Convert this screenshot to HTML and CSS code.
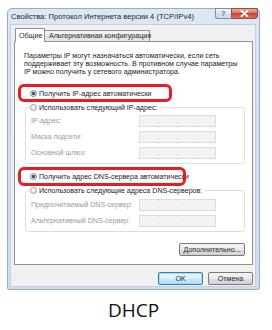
FILE: index.html
```html
<!DOCTYPE html>
<html>
<head>
<meta charset="utf-8">
<link rel="stylesheet" href="styles.css">
</head>
<body>
<div class="window">
  <div class="titlebar">
    <span class="title">Свойства: Протокол Интернета версии 4 (TCP/IPv4)</span>
    <div class="caption-btns">
      <span class="cbtn help">?</span>
      <span class="cbtn close"><svg width="9" height="7" viewBox="0 0 9 7"><path d="M1.5 0.8 L7.5 6.2 M7.5 0.8 L1.5 6.2" stroke="#fff" stroke-width="1.8" stroke-linecap="round"/></svg></span>
    </div>
  </div>
  <div class="client">
    <div class="tabs">
      <span class="tab active">Общие</span>
      <span class="tab">Альтернативная конфигурация</span>
    </div>
    <div class="panel">
      <p class="intro">Параметры IP могут назначаться автоматически, если сеть<br>поддерживает эту возможность. В противном случае параметры<br>IP можно получить у сетевого администратора.</p>
      <div class="radio-row mark mark-ip"><span class="radio on"></span>Получить IP-адрес автоматически</div>
      <div class="group">
        <div class="radio-row legend"><span class="radio"></span>Использовать следующий IP-адрес:</div>
        <div class="field"><span class="label">IP-адрес:</span><span class="ip"><i>.</i><i>.</i><i>.</i></span></div>
        <div class="field"><span class="label">Маска подсети:</span><span class="ip"><i>.</i><i>.</i><i>.</i></span></div>
        <div class="field"><span class="label">Основной шлюз:</span><span class="ip"><i>.</i><i>.</i><i>.</i></span></div>
      </div>
      <div class="radio-row mark mark-dns"><span class="radio on"></span>Получить адрес DNS-сервера автоматически</div>
      <div class="group group-dns">
        <div class="radio-row legend"><span class="radio"></span>Использовать следующие адреса DNS-серверов:</div>
        <div class="field"><span class="label">Предпочитаемый DNS-сервер:</span><span class="ip"><i>.</i><i>.</i><i>.</i></span></div>
        <div class="field"><span class="label">Альтернативный DNS-сервер:</span><span class="ip"><i>.</i><i>.</i><i>.</i></span></div>
      </div>
      <div class="adv-row"><span class="btn adv">Дополнительно...</span></div>
    </div>
    <div class="footer">
      <span class="btn ok">OK</span>
      <span class="btn cancel">Отмена</span>
    </div>
  </div>
</div>
<div class="caption">DHCP</div>
</body>
</html>
```

FILE: styles.css
```css
*, *::before, *::after { box-sizing: border-box; }
html, body { margin: 0; padding: 0; background: #fff; }
body {
  font-family: "Liberation Sans", Arial, sans-serif;
  font-size: 7.1px;
  color: #1a1a1a;
}

.window {
  margin: 8px 0 0 7px;
  width: 253px;
  height: 282px;
  border: 1px solid #9aadc4;
  border-radius: 5px 5px 2px 2px;
  background: linear-gradient(to bottom, #dde8f5 0%, #d3e0ef 40%, #cfdeee 100%);
  display: flex;
  flex-direction: column;
}

.titlebar {
  height: 15px;
  display: flex;
  align-items: center;
  padding-left: 3px;
}
.title {
  flex: 1;
  font-size: 7.6px;
  color: #1e1e1e;
  white-space: nowrap;
}
.caption-btns {
  align-self: flex-start;
  margin-top: -1px;
  margin-right: 1px;
  display: flex;
}
.cbtn {
  height: 11px;
  display: flex;
  align-items: center;
  justify-content: center;
  border: 1px solid #7e8ea6;
}
.help {
  width: 16px;
  border-radius: 0 0 0 3px;
  border-right: none;
  background: linear-gradient(to bottom, #eef3f9 0%, #dbe4ef 50%, #c9d6e6 51%, #d6e1ee 100%);
  color: #6b7482;
  font-size: 7px;
  font-weight: bold;
}
.close {
  width: 27px;
  border-color: #9a4a42;
  border-radius: 0 0 3px 0;
  background: linear-gradient(to bottom, #e9a99c 0%, #d97b6c 45%, #c8472f 50%, #d6705b 100%);
}

.client {
  flex: 1;
  margin: 0 3px 2px 2px;
  background: #f0f0f0;
  border: 1px solid #c3cfdc;
  padding: 2px 2px 0 3px;
  display: flex;
  flex-direction: column;
}

.tabs {
  height: 14px;
  display: flex;
  align-items: flex-end;
  position: relative;
  z-index: 1;
}
.tab {
  height: 11px;
  display: flex;
  align-items: center;
  padding: 0 3px;
  border: 1px solid #8e9297;
  border-bottom: none;
  background: linear-gradient(to bottom, #f5f5f5 0%, #ebebeb 50%, #dedede 51%, #e8e8e8 100%);
  color: #2a2a2a;
  white-space: nowrap;
}
.tab + .tab {
  width: 106px;
  margin-left: -1px;
  padding-left: 4px;
}
.tab.active {
  width: 30px;
  height: 14px;
  margin-left: 1px;
  margin-bottom: -1px;
  background: #fff;
  padding-left: 3px;
  position: relative;
  z-index: 2;
}

.panel {
  height: 224px;
  border: 1px solid #8e9297;
  background: #fff;
  padding: 10px 0 0 0;
  display: flex;
  flex-direction: column;
  align-items: flex-start;
}

.intro {
  margin: 0 0 0 9px;
  line-height: 8px;
  white-space: nowrap;
  color: #222;
}

.radio-row {
  height: 11px;
  display: flex;
  align-items: center;
  white-space: nowrap;
  color: #1a1a1a;
}
.radio {
  width: 7px;
  height: 7px;
  border-radius: 50%;
  border: 1px solid #9a9ea4;
  background: radial-gradient(circle at 40% 35%, #ffffff 0%, #e2e4e7 70%, #cfd3d8 100%);
  margin-right: 2px;
  flex: none;
}
.radio.on {
  background: radial-gradient(circle, #2b6b9e 0%, #1a4466 38%, #dfe4ea 45%, #eef0f3 100%);
  border-color: #7d8791;
}

.mark {
  margin-left: 15px;
  position: relative;
  z-index: 3;
}
.mark::after {
  content: "";
  position: absolute;
  left: -12px;
  border: 3px solid #ea1b23;
  border-radius: 6px;
}
.mark-ip {
  margin-top: 12px;
}
.mark-ip::after {
  top: -4px;
  height: 18px;
  width: 154px;
}
.mark-dns {
  margin-top: 7px;
}
.mark-dns::after {
  top: -4px;
  height: 19px;
  width: 168px;
}

/* group box: legend row sits on the frame line */
.group {
  margin: 3px 0 0 10px;
  width: 220px;
  position: relative;
  padding: 0 0 5px 0;
}
.group::before {
  content: "";
  position: absolute;
  left: 0;
  right: 0;
  top: 5px;
  bottom: 0;
  border: 1px solid #d8dfe6;
  border-radius: 3px;
}
.legend {
  position: relative;
  z-index: 1;
  margin-left: 5px;
  width: max-content;
  background: #fff;
  padding-right: 2px;
}

.field {
  position: relative;
  height: 12px;
  margin-top: 4px;
  padding-left: 6px;
  display: flex;
  align-items: center;
}
.legend + .field { margin-top: 2px; }
.group-dns .legend + .field { margin-top: 3px; }
.label {
  width: 108px;
  color: #9a9a9a;
  white-space: nowrap;
}
.ip {
  width: 77px;
  height: 12px;
  border: 1px solid #dcdcdc;
  background: #f3f3f3;
  display: flex;
  justify-content: space-evenly;
  align-items: center;
  color: #a0a0a0;
}
.ip i {
  font-style: normal;
  line-height: 8px;
}

.adv-row {
  align-self: stretch;
  display: flex;
  justify-content: flex-end;
  padding-right: 7px;
  margin-top: 11px;
}

.btn {
  height: 13px;
  display: flex;
  align-items: center;
  justify-content: center;
  border: 1px solid #7a7a7a;
  border-radius: 2px;
  background: linear-gradient(to bottom, #f3f3f3 0%, #ebebeb 50%, #dddddd 51%, #d3d3d3 100%);
  color: #1e1e1e;
  white-space: nowrap;
}
.adv { width: 66px; }

.footer {
  display: flex;
  justify-content: flex-end;
  gap: 5px;
  margin-top: 7px;
}
.ok, .cancel { width: 45px; }
.ok {
  border-color: #3d7bad;
  background: linear-gradient(to bottom, #e8f5fc 0%, #dcf0fb 50%, #c4e6f8 51%, #b6dff5 100%);
  box-shadow: inset 0 0 0 1px #a6dcf6;
}

.caption {
  width: 253px;
  margin: 10px 0 0 7px;
  text-align: center;
  font-family: "Open Sans", "Noto Sans", sans-serif;
  font-size: 19px;
  line-height: 20px;
  color: #111;
}
```
